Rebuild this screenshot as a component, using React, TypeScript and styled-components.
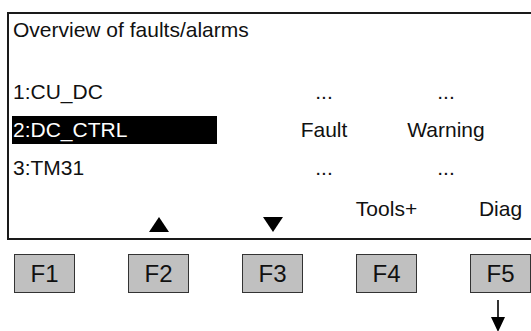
import React from 'react';
import styled, {createGlobalStyle} from 'styled-components';

const GlobalStyle = createGlobalStyle`
  body {
    margin: 0;
    background: #fff;
    color: #111;
    font-family: "Liberation Sans", Arial, sans-serif;
  }
`;

const Panel = styled.div`
  width: 531px;
  height: 331px;
  overflow: hidden;
`;

const Screen = styled.div`
  margin: 12px 0 0 7px;
  border: 2px solid #1a1a1a;
  border-right: none;
  padding: 2px 0 0 3px;
  display: flex;
  flex-direction: column;
`;

const Title = styled.div`
  font-size: 21px;
  line-height: 28px;
  padding-left: 1px;
  margin-bottom: 34px;
`;

const List = styled.div`
  display: flex;
  flex-direction: column;
  gap: 10px;
`;

const Row = styled.div`
  display: grid;
  grid-template-columns: 251px 122px 122px;
  height: 28px;
  line-height: 28px;
  font-size: 21px;
`;

const Name = styled.div<{ $selected?: boolean }>`
  width: 205px;
  padding-left: 1px;
  box-sizing: border-box;
  background: ${p => (p.$selected ? '#000' : 'transparent')};
  color: ${p => (p.$selected ? '#fff' : '#111')};
`;

const Value = styled.div`
  text-align: center;
`;

const Labels = styled.div`
  margin-top: 13px;
  height: 43px;
  padding-left: 2px;
  display: flex;
  gap: 53px;
`;

const Label = styled.div`
  width: 61px;
  display: flex;
  justify-content: center;
  align-items: flex-start;
  white-space: nowrap;
  font-size: 21px;
  line-height: 28px;
`;

const Tri = styled.svg`
  margin-top: 22px;
  display: block;
`;

const Keys = styled.div`
  margin: 14px 0 0 14px;
  display: flex;
  gap: 53px;
`;

const Slot = styled.div`
  width: 61px;
  display: flex;
  flex-direction: column;
  align-items: center;
  gap: 7px;
`;

const Key = styled.div`
  width: 61px;
  height: 39px;
  box-sizing: border-box;
  border: 1.5px solid #333;
  background: #c0c0c0;
  display: flex;
  align-items: center;
  justify-content: center;
  font-size: 24px;
  color: #111;
`;

const Up = () => (
  <Tri width="20" height="15" viewBox="0 0 20 15">
    <polygon points="10,0 20,15 0,15" fill="#000" />
  </Tri>
);

const Down = () => (
  <Tri width="20" height="15" viewBox="0 0 20 15">
    <polygon points="0,0 20,0 10,15" fill="#000" />
  </Tri>
);

const ArrowDown = () => (
  <svg width="16" height="32" viewBox="0 0 16 32" style={{marginRight: 5}}>
    <line x1="8" y1="0" x2="8" y2="18" stroke="#000" strokeWidth="1.6" />
    <polygon points="1,17 15,17 8,32" fill="#000" />
  </svg>
);

const rows = [
  {name: '1:CU_DC', fault: '...', warning: '...'},
  {name: '2:DC_CTRL', fault: 'Fault', warning: 'Warning', selected: true},
  {name: '3:TM31', fault: '...', warning: '...'},
];

export default function App() {
  return (
    <Panel>
      <GlobalStyle />
      <Screen>
        <Title>Overview of faults/alarms</Title>
        <List>
          {rows.map(r => (
            <Row key={r.name}>
              <Name $selected={r.selected}>{r.name}</Name>
              <Value>{r.fault}</Value>
              <Value>{r.warning}</Value>
            </Row>
          ))}
        </List>
        <Labels>
          <Label></Label>
          <Label><Up /></Label>
          <Label><Down /></Label>
          <Label>Tools+</Label>
          <Label>Diag</Label>
        </Labels>
      </Screen>
      <Keys>
        {['F1', 'F2', 'F3', 'F4', 'F5'].map(k => (
          <Slot key={k}>
            <Key>{k}</Key>
            {k === 'F5' && <ArrowDown />}
          </Slot>
        ))}
      </Keys>
    </Panel>
  );
}
